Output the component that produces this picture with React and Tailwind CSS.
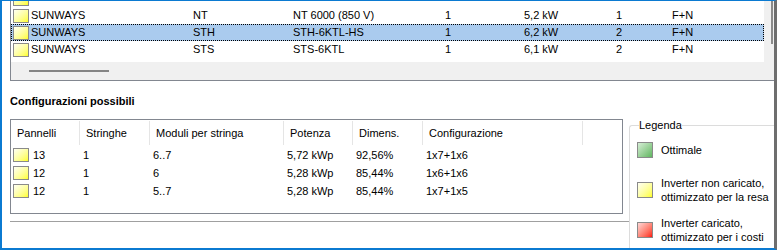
import clsx from "clsx";

const inverters = [
  { brand: "", series: "", model: "", qty: "", power: "", mppt: "", conn: "" },
  { brand: "SUNWAYS", series: "NT", model: "NT 6000 (850 V)", qty: "1", power: "5,2 kW", mppt: "1", conn: "F+N" },
  { brand: "SUNWAYS", series: "STH", model: "STH-6KTL-HS", qty: "1", power: "6,2 kW", mppt: "2", conn: "F+N", selected: true },
  { brand: "SUNWAYS", series: "STS", model: "STS-6KTL", qty: "1", power: "6,1 kW", mppt: "2", conn: "F+N" },
];

const configs = [
  { panels: "13", strings: "1", modules: "6..7", power: "5,72 kWp", dim: "92,56%", conf: "1x7+1x6" },
  { panels: "12", strings: "1", modules: "6", power: "5,28 kWp", dim: "85,44%", conf: "1x6+1x6" },
  { panels: "12", strings: "1", modules: "5..7", power: "5,28 kWp", dim: "85,44%", conf: "1x7+1x5" },
];

const headers = ["Pannelli", "Stringhe", "Moduli per stringa", "Potenza", "Dimens.", "Configurazione"];

function Swatch({ color = "yellow", className }) {
  const fills = {
    yellow: "bg-linear-to-br from-[#fffff2] to-[#ffff00]",
    green: "bg-linear-to-br from-[#d6eed6] to-[#5fb65f]",
    red: "bg-linear-to-br from-[#ffd6d6] to-[#ff0000]",
  };
  return <span className={clsx("block shrink-0 border border-[#8a8a8a]", fills[color], className)} />;
}

export default function App() {
  return (
    <div className="w-[777px] h-[250px] overflow-hidden bg-white flex flex-col border-t border-l-2 border-b-2 border-[#0b7ad1] border-r-[3px] border-r-[#6e6e6e] text-[11px] text-black font-['Liberation_Sans',Arial,sans-serif]">
      {/* inverter list */}
      <div className="ml-[8px] h-[80px] shrink-0 flex border-l border-b border-[#828790]">
        <div className="flex-1 flex flex-col">
          <div className="h-[61px] bg-white overflow-hidden">
            <div className="-mt-[11px]">
              {inverters.map((r, i) => (
                <div
                  key={i}
                  className={clsx(
                    "grid grid-cols-[20px_162px_100px_152px_79px_92px_56px_1fr] h-[17px] leading-[17px] items-center",
                    r.selected && "bg-[#aacbee] outline-1 outline-dotted outline-black -outline-offset-1"
                  )}
                >
                  <div className="pl-[2px]">
                    <Swatch className="w-4 h-[14px]" />
                  </div>
                  <div>{r.brand}</div>
                  <div>{r.series}</div>
                  <div>{r.model}</div>
                  <div>{r.qty}</div>
                  <div>{r.power}</div>
                  <div>{r.mppt}</div>
                  <div>{r.conn}</div>
                </div>
              ))}
            </div>
          </div>
          <div className="h-[18px] bg-[#f0f0f0] pt-[8px] pl-[18px]">
            <div className="h-[2px] w-[80px] bg-[#858585]" />
          </div>
        </div>
        <div className="w-[10px] bg-[#f0f0f0] flex justify-end pr-[1px]">
          <div className="w-[2px] h-[43px] bg-[#8a8a8a]" />
        </div>
      </div>

      <div className="mt-[14px] ml-[8px] h-[13px] leading-[13px] font-bold">Configurazioni possibili</div>
      <div className="mt-[4px] ml-[8px] h-px bg-[#a0a0a0]" />

      <div className="ml-[8px] flex">
        <div className="w-[619px] shrink-0 flex flex-col">
          <div className="mt-[7px] w-[613px] h-[95px] border border-[#828790]">
            <div className="grid grid-cols-[69px_70px_134px_69px_70px_160px_1fr] h-[26px]">
              {headers.map((h) => (
                <div key={h} className="my-[1px] pl-[6px] leading-[24px] border-r border-[#e5e5e5]">
                  {h}
                </div>
              ))}
              <div />
            </div>
            {configs.map((c, i) => (
              <div key={i} className="grid grid-cols-[69px_70px_134px_69px_70px_160px_1fr] h-[18px] leading-[18px]">
                <div className="pl-[2px] flex items-center gap-[4px]">
                  <Swatch className="w-4 h-[14px]" />
                  <span>{c.panels}</span>
                </div>
                <div className="pl-[3px]">{c.strings}</div>
                <div className="pl-[3px]">{c.modules}</div>
                <div className="pl-[3px]">{c.power}</div>
                <div className="pl-[3px]">{c.dim}</div>
                <div className="pl-[3px]">{c.conf}</div>
                <div />
              </div>
            ))}
          </div>
          <div className="mt-[7px] h-px bg-[#a0a0a0]" />
        </div>

        <fieldset className="mt-[7px] flex-1 h-[140px] border border-r-0 border-[#dcdcdc] rounded-l-[3px] pl-[7px]">
          <legend className="ml-[2px] leading-[13px]">Legenda</legend>
          <div className="-mt-[2px] flex flex-col">
            <div className="h-[40px] flex items-center gap-[8px]">
              <Swatch color="green" className="w-4 h-4" />
              <span>Ottimale</span>
            </div>
            <div className="h-[40px] flex items-center gap-[8px]">
              <Swatch color="yellow" className="w-4 h-4" />
              <span className="leading-[14px]">
                Inverter non caricato,
                <br />
                ottimizzato per la resa
              </span>
            </div>
            <div className="h-[40px] flex items-center gap-[8px]">
              <Swatch color="red" className="w-4 h-4" />
              <span className="leading-[14px]">
                Inverter caricato,
                <br />
                ottimizzato per i costi
              </span>
            </div>
          </div>
        </fieldset>
      </div>
    </div>
  );
}
